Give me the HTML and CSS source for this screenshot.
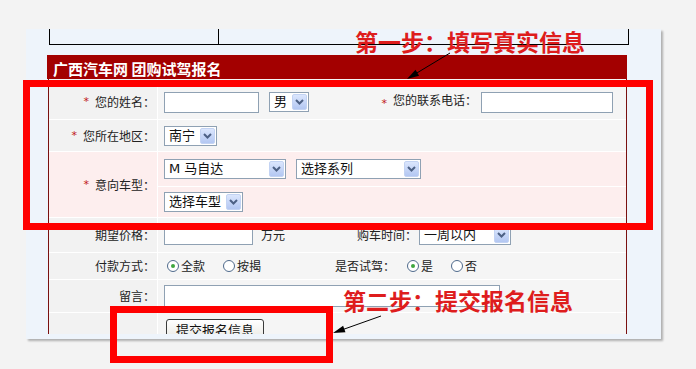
FILE: index.html
```html
<!DOCTYPE html>
<html lang="zh-cn">
<head>
    <meta charset="UTF-8">
    <title>广西汽车网 团购试驾报名</title>
    <link rel="stylesheet" href="styles.css">
</head>
<body>
<div class="page">
    <div class="panel">
        <div class="viewport">
            <div class="top-strip">
                <div class="strip-cell"></div>
                <div class="strip-cell last"></div>
            </div>

            <div class="title">广西汽车网 团购试驾报名</div>

            <div class="form-box">
                <div class="form-grid">
                    <div class="lbl first"><em>*</em>您的姓名：</div>
                    <div class="fld first">
                        <input class="txt w-name" type="text">
                        <span class="sel w-sex"><span>男</span><span class="arr"><svg width="9" height="6" viewBox="0 0 9 6"><path d="M1 1l3.5 3.5L8 1" fill="none" stroke="#4d6185" stroke-width="2"/></svg></span></span>
                        <span class="inline-lbl"><em>*</em>您的联系电话：</span>
                        <input class="txt w-phone" type="text">
                    </div>

                    <div class="lbl"><em>*</em>您所在地区：</div>
                    <div class="fld">
                        <span class="sel w-city"><span>南宁</span><span class="arr"><svg width="9" height="6" viewBox="0 0 9 6"><path d="M1 1l3.5 3.5L8 1" fill="none" stroke="#4d6185" stroke-width="2"/></svg></span></span>
                    </div>

                    <div class="lbl pink span2"><em>*</em>意向车型：</div>
                    <div class="fld pink">
                        <span class="sel w-brand"><span>M 马自达</span><span class="arr"><svg width="9" height="6" viewBox="0 0 9 6"><path d="M1 1l3.5 3.5L8 1" fill="none" stroke="#4d6185" stroke-width="2"/></svg></span></span>
                        <span class="sel w-series"><span>选择系列</span><span class="arr"><svg width="9" height="6" viewBox="0 0 9 6"><path d="M1 1l3.5 3.5L8 1" fill="none" stroke="#4d6185" stroke-width="2"/></svg></span></span>
                    </div>
                    <div class="fld pink">
                        <span class="sel w-model"><span>选择车型</span><span class="arr"><svg width="9" height="6" viewBox="0 0 9 6"><path d="M1 1l3.5 3.5L8 1" fill="none" stroke="#4d6185" stroke-width="2"/></svg></span></span>
                    </div>

                    <div class="lbl">期望价格：</div>
                    <div class="fld">
                        <input class="txt w-price" type="text">
                        <span class="unit">万元</span>
                        <span class="mid-lbl">购车时间：</span>
                        <span class="sel w-time"><span>一周以内</span><span class="arr"><svg width="9" height="6" viewBox="0 0 9 6"><path d="M1 1l3.5 3.5L8 1" fill="none" stroke="#4d6185" stroke-width="2"/></svg></span></span>
                    </div>

                    <div class="lbl">付款方式：</div>
                    <div class="fld">
                        <span class="radio on"></span><span class="opt">全款</span>
                        <span class="radio gap"></span><span class="opt">按揭</span>
                        <span class="drive-lbl">是否试驾：</span>
                        <span class="radio on near"></span><span class="opt">是</span>
                        <span class="radio gap"></span><span class="opt">否</span>
                    </div>

                    <div class="lbl">留言：</div>
                    <div class="fld">
                        <textarea class="memo"></textarea>
                    </div>

                    <div class="lbl"></div>
                    <div class="fld top">
                        <button class="submit" type="button">提交报名信息</button>
                    </div>
                </div>
            </div>
        </div>
    </div>

    <!-- annotations drawn over the screenshot -->
    <div class="mark mark-1"></div>
    <div class="mark mark-2"></div>
    <span class="step step-1">第一步：填写真实信息</span>
    <span class="step step-2">第二步：提交报名信息</span>
    <svg class="arrows" width="696" height="369" viewBox="0 0 696 369">
        <line x1="450" y1="53" x2="416" y2="73.5" stroke="#000" stroke-width="1"/>
        <polygon points="407,79 419.1,75.8 415.5,69.8" fill="#000"/>
        <line x1="381" y1="316" x2="343" y2="329.5" stroke="#000" stroke-width="1"/>
        <polygon points="333,333 345.5,332.3 343.1,325.7" fill="#000"/>
    </svg>
</div>
</body>
</html>
```

FILE: styles.css
```css
body {
    margin: 0;
    background-color: #f3f3f3;
    font-family: "Noto Sans CJK SC", sans-serif;
    font-size: 12px;
    color: #222;
}
.page {
    position: relative;
    width: 696px;
    height: 369px;
    padding: 29px 0 0 26px;
    box-sizing: border-box;
    overflow: hidden;
}
.panel {
    width: 635px;
    height: 310px;
    padding-bottom: 5px;
    box-sizing: border-box;
    background-color: #eef4fb;
    box-shadow: 2px 2px 2px rgba(0, 0, 0, 0.28);
}
.viewport {
    height: 305px;
    overflow: hidden;
}
.top-strip {
    display: flex;
    margin-left: 23px;
    width: 580px;
    height: 16px;
    box-sizing: border-box;
    border: 1px solid #000;
    border-top: none;
}
.strip-cell {
    width: 168px;
    border-right: 1px solid #000;
}
.strip-cell.last {
    flex: 1;
    border-right: none;
}
.title {
    margin: 10px 0 0 21px;
    width: 580px;
    height: 24px;
    box-sizing: border-box;
    padding: 3px 0 0 6px;
    line-height: 21px;
    background-color: #a30000;
    color: #fff;
    font-size: 15px;
    font-weight: bold;
}
.form-box {
    margin-left: 22px;
    width: 579px;
    box-sizing: border-box;
    border-left: 1px solid #7a1010;
    border-right: 1px solid #7a1010;
}
.form-grid {
    display: grid;
    grid-template-columns: 108px 1fr;
    grid-template-rows: 40px 31px 34px 30px 34px 26px 32px 32px;
    gap: 1px;
    background-color: #fff;
}
.lbl {
    display: flex;
    align-items: center;
    justify-content: flex-end;
    padding-right: 2px;
    background-color: #f2f2f2;
    line-height: 14px;
}
.fld {
    display: flex;
    align-items: center;
    padding-left: 6px;
    background-color: #f5f5f5;
    line-height: 14px;
}
.first {
    padding-top: 6px;
}
.top {
    align-items: flex-start;
    padding-top: 6px;
}
.pink {
    background-color: #fdeeee;
}
.span2 {
    grid-row: span 2;
}
em {
    font-style: normal;
    color: #c01818;
    margin-right: 6px;
    vertical-align: -2px;
    font-family: "DejaVu Sans", sans-serif;
    font-size: 11px;
}
.txt {
    height: 21px;
    box-sizing: border-box;
    border: 1px solid #8fa1b3;
    background-color: #fff;
    padding: 0;
    margin: 0;
}
.w-name { width: 95px; }
.w-phone { width: 132px; margin-left: 4px; }
.w-price { width: 89px; height: 20px; }
.inline-lbl {
    width: 168px;
    text-align: right;
}
.sel {
    display: inline-flex;
    align-items: center;
    justify-content: space-between;
    height: 20px;
    box-sizing: border-box;
    border: 1px solid #8fa1b3;
    background-color: #fff;
    padding: 0 1px 0 4px;
    font-family: "DejaVu Sans", "Noto Sans CJK SC", sans-serif;
    font-size: 13px;
    color: #111;
}
.sel .arr {
    display: flex;
    align-items: center;
    justify-content: center;
    width: 15px;
    height: 16px;
    box-sizing: border-box;
    border: 1px solid #c3d3f3;
    border-radius: 2px;
    background: linear-gradient(#dbe6fd, #b3c7f2);
}
.w-sex { width: 40px; margin-left: 10px; }
.w-city { width: 53px; }
.w-brand { width: 122px; }
.w-series { width: 125px; margin-left: 10px; }
.w-model { width: 79px; }
.w-time { width: 92px; margin-left: 2px; }
.unit {
    margin-left: 8px;
}
.mid-lbl {
    margin-left: 72px;
}
.radio {
    display: inline-flex;
    align-items: center;
    justify-content: center;
    width: 12px;
    height: 12px;
    box-sizing: border-box;
    margin: 0 2px 0 3px;
    border: 1px solid #4f6a8c;
    border-radius: 50%;
    background-color: #fff;
}
.radio.on::after {
    content: "";
    width: 4px;
    height: 4px;
    border-radius: 50%;
    background-color: #3fa63f;
}
.radio.gap {
    margin-left: 18px;
}
.radio.near {
    margin-left: 12px;
}
.drive-lbl {
    margin-left: 74px;
}
.memo {
    width: 336px;
    height: 22px;
    box-sizing: border-box;
    margin: 0;
    padding: 0;
    border: 1px solid #8fa1b3;
    background-color: #fff;
    resize: none;
}
.submit {
    width: 98px;
    height: 22px;
    margin-left: 2px;
    padding: 0;
    border: 1px solid #3a3a3a;
    border-radius: 3px;
    background: linear-gradient(#ffffff, #e9e8e2);
    font-family: "Noto Sans CJK SC", sans-serif;
    font-size: 13px;
    line-height: 18px;
    color: #111;
}
.mark {
    position: absolute;
    box-sizing: border-box;
    border: 7px solid #f00;
}
.mark-1 {
    left: 23px;
    top: 80px;
    width: 630px;
    height: 150px;
}
.mark-2 {
    left: 110px;
    top: 306px;
    width: 223px;
    height: 57px;
}
.step {
    position: absolute;
    font-size: 23px;
    font-weight: bold;
    line-height: 23px;
    color: #de1d1d;
    white-space: nowrap;
}
.step-1 {
    left: 355px;
    top: 30px;
}
.step-2 {
    left: 343px;
    top: 289px;
}
.arrows {
    position: absolute;
    left: 0;
    top: 0;
    pointer-events: none;
}
```
